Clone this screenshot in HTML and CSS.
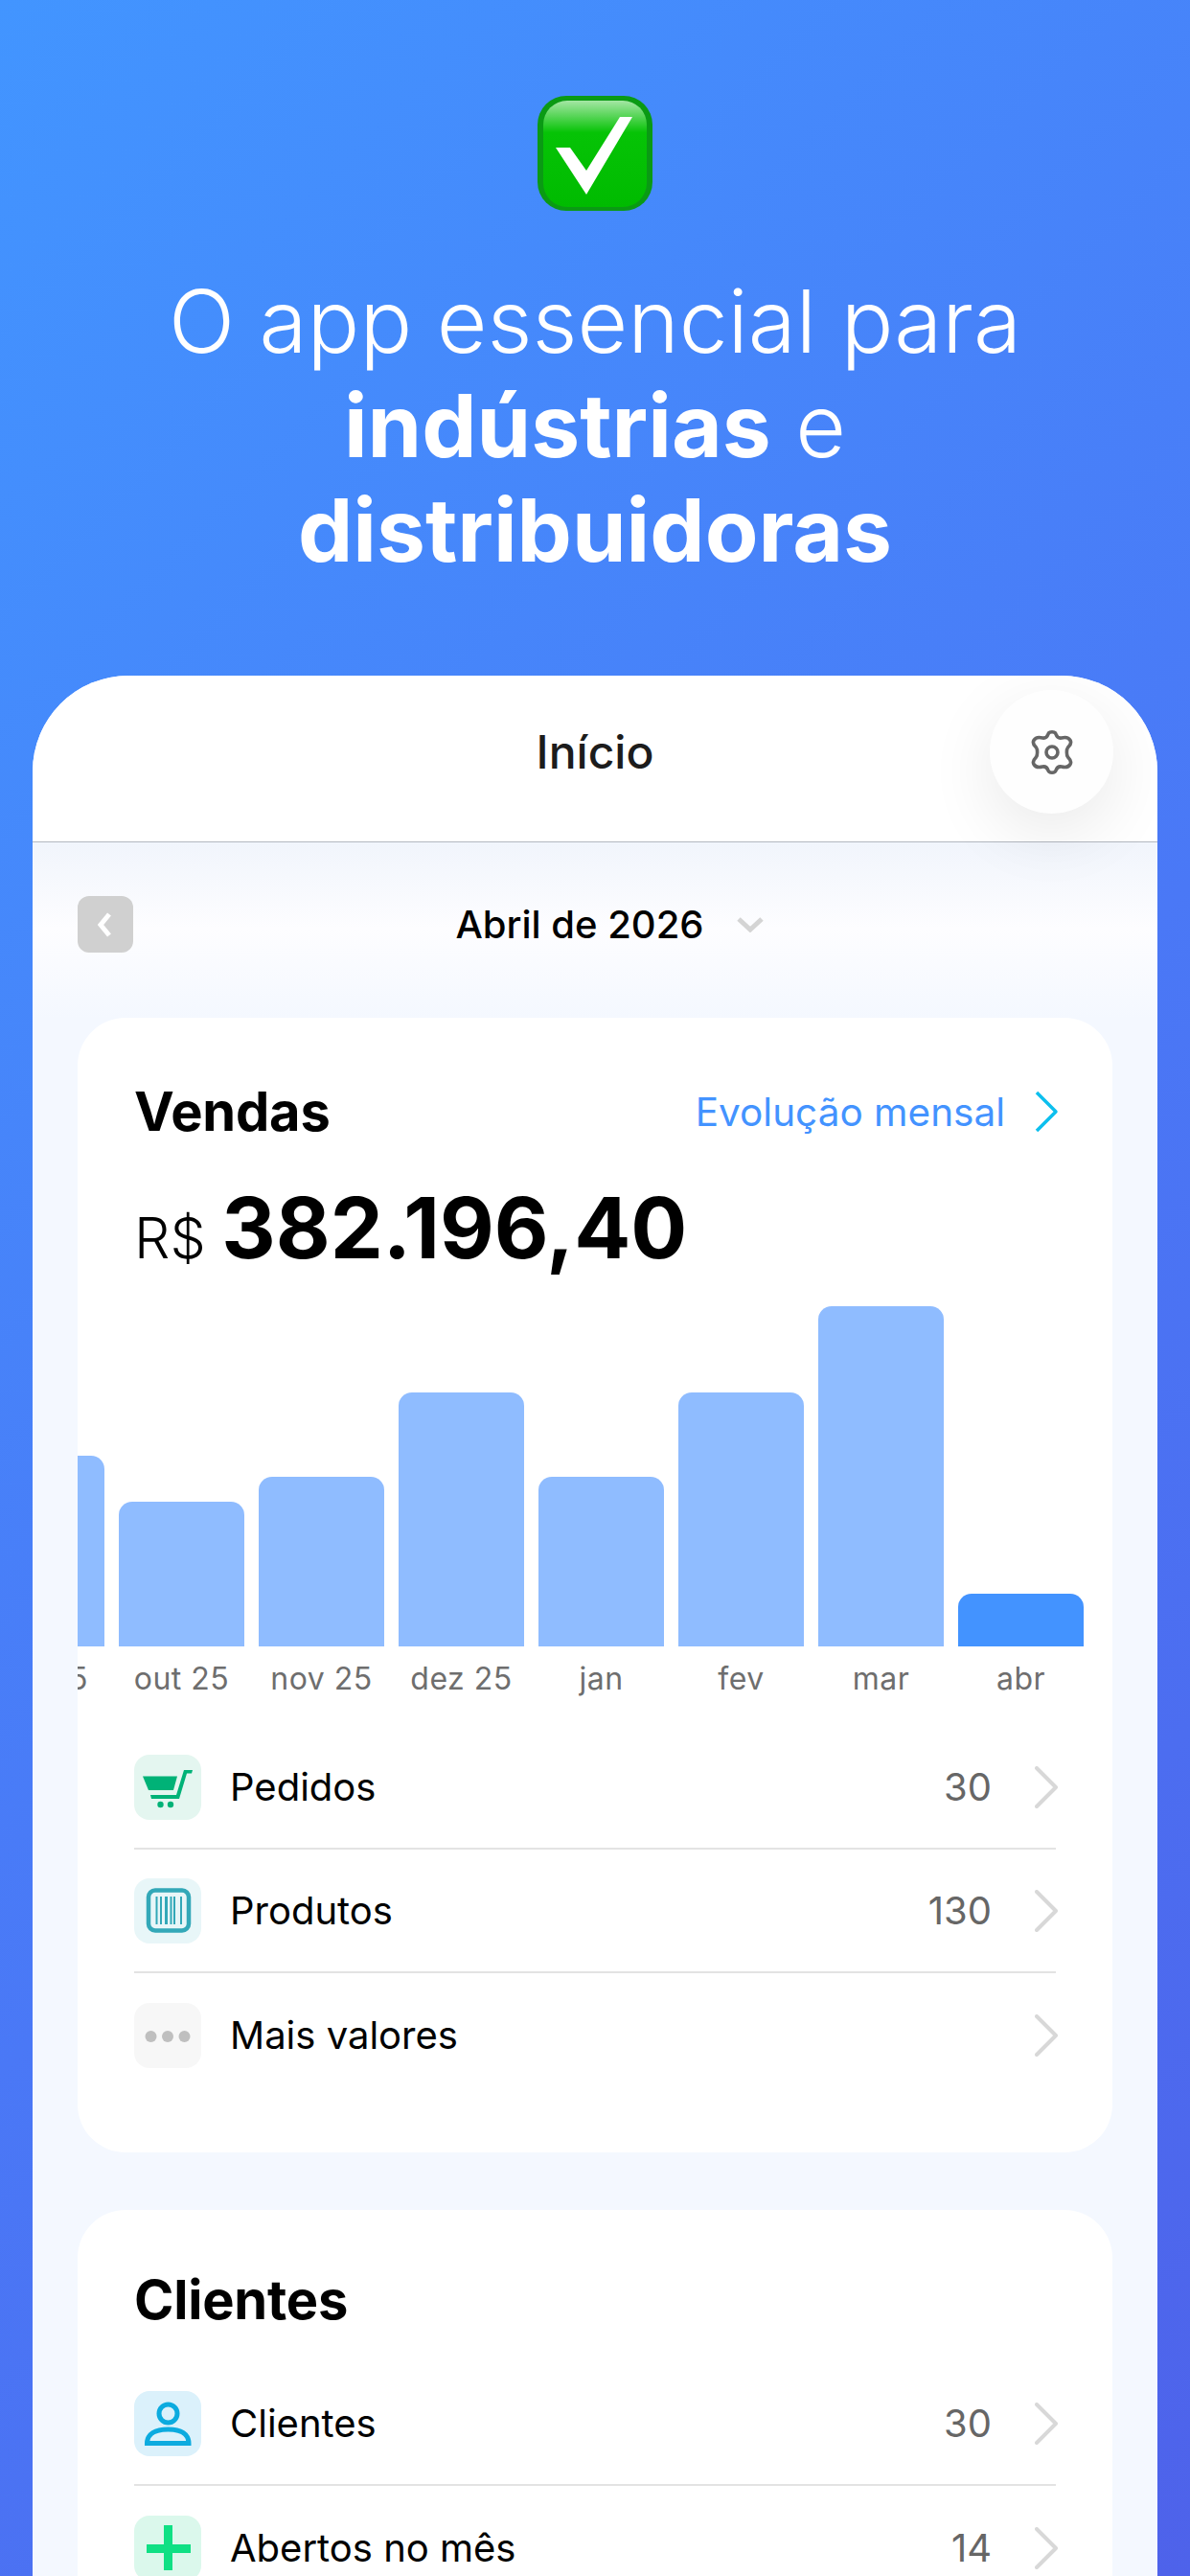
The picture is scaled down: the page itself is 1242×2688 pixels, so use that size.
FILE: index.html
```html
<!DOCTYPE html>
<html lang="pt-br">
<head>
    <meta charset="UTF-8">
    <meta name="viewport" content="width=device-width, initial-scale=1.0">
    <link rel="stylesheet" href="styles.css">
    <title>Início</title>
</head>
<body>
    <header class="hero">
        <svg class="hero-check" viewBox="0 0 120 120">
            <defs>
                <linearGradient id="shine" x1="0" y1="0" x2="0" y2="1">
                    <stop offset="0" stop-color="#a4e6a4"/>
                    <stop offset="0.3" stop-color="#06c306"/>
                    <stop offset="1" stop-color="#00bb00"/>
                </linearGradient>
            </defs>
            <rect x="0" y="0" width="120" height="120" rx="30" fill="#0a9a14"/>
            <rect x="6" y="5" width="108" height="111" rx="25" fill="url(#shine)"/>
            <path d="M19 54H34L51 78L86 22H99L51 103Z" fill="#fff"/>
        </svg>
        <h1 class="hero-title">O app essencial para<br><strong>indústrias</strong> e<br><strong>distribuidoras</strong></h1>
    </header>

    <main class="phone">
        <div class="topbar">
            <span class="topbar-title">Início</span>
            <button class="settings">
                <svg viewBox="0 0 48 48" width="48" height="48" fill="none" stroke="#666" stroke-width="3.600" stroke-linejoin="round">
                    <path d="M14 9C17 9.500 19 8 20 5C21 2 27 2 28 5C29 8 31 9.500 34 9C37 8.200 41 8 43 11.500C45 15 42.500 17 40.500 19C39 21 39 27 40.500 29C42.500 31 45 33 43 36.500C41 40 37 39.800 34 39C31 38.500 29 40 28 43C27 46 21 46 20 43C19 40 17 38.500 14 39C11 39.800 7 40 5 36.500C3 33 5.500 31 7.500 29C9 27 9 21 7.500 19C5.500 17 3 15 5 11.500C7 8 11 8.200 14 9Z"/>
                    <circle cx="24" cy="24" r="6"/>
                </svg>
            </button>
        </div>

        <div class="content">
            <div class="month">
                <span class="month-back">
                    <svg viewBox="0 0 58 59" width="58" height="59" fill="none" stroke="#fff" stroke-width="5"><path d="M33 19L24 30L33 41"/></svg>
                </span>
                <span class="month-name">Abril de 2026</span>
                <svg class="month-arrow" viewBox="0 0 28 16" width="28" height="16" fill="none" stroke="#d4d4d4" stroke-width="5"><path d="M2 2L14 13L26 2"/></svg>
            </div>

            <section class="card sales">
                <div class="card-head">
                    <h2>Vendas</h2>
                    <a class="card-link">Evolução mensal
                        <svg viewBox="0 0 26 44" width="26" height="44" fill="none" stroke="#0cbfee" stroke-width="3.500" stroke-linejoin="round"><path d="M3 2L23 22L3 42"/></svg>
                    </a>
                </div>
                <p class="amount"><span>R$</span> <b>382.196,40</b></p>

                <div class="chart">
                    <div class="col"><div class="bar" style="height:199px"></div><span>set 25</span></div>
                    <div class="col"><div class="bar" style="height:151px"></div><span>out 25</span></div>
                    <div class="col"><div class="bar" style="height:177px"></div><span>nov 25</span></div>
                    <div class="col"><div class="bar" style="height:265px"></div><span>dez 25</span></div>
                    <div class="col"><div class="bar" style="height:177px"></div><span>jan</span></div>
                    <div class="col"><div class="bar" style="height:265px"></div><span>fev</span></div>
                    <div class="col"><div class="bar" style="height:355px"></div><span>mar</span></div>
                    <div class="col"><div class="bar bar-now" style="height:55px"></div><span>abr</span></div>
                </div>

                <ul class="rows">
                    <li class="row">
                        <span class="ico ico-cart">
                            <svg viewBox="0 0 70 68" width="70" height="68" fill="#00b277">
                                <path d="M9 22.500H45L41 37H15Z"/>
                                <path d="M52 16H61L60 19.500H55L47 46H18L17 42H44Z"/>
                                <circle cx="27.500" cy="52" r="3.200"/>
                                <circle cx="38" cy="52" r="3.200"/>
                            </svg>
                        </span>
                        <span class="row-name">Pedidos</span>
                        <span class="row-num">30</span>
                        <svg class="row-arrow" viewBox="0 0 24 44" width="24" height="44" fill="none" stroke="#d8d8d8" stroke-width="4" stroke-linecap="round" stroke-linejoin="round"><path d="M2 2L22 22L2 42"/></svg>
                    </li>
                    <li class="row">
                        <span class="ico ico-code">
                            <svg viewBox="0 0 70 68" width="70" height="68" fill="none" stroke="#33a8b8">
                                <rect x="15" y="12.500" width="42" height="42" rx="7" stroke-width="4.500"/>
                                <path d="M23.500 19V48M28 19V48M38.500 19V48M42 19V48M49 19V48" stroke-width="2"/>
                                <path d="M33.500 19V48" stroke-width="3"/>
                            </svg>
                        </span>
                        <span class="row-name">Produtos</span>
                        <span class="row-num">130</span>
                        <svg class="row-arrow" viewBox="0 0 24 44" width="24" height="44" fill="none" stroke="#d8d8d8" stroke-width="4" stroke-linecap="round" stroke-linejoin="round"><path d="M2 2L22 22L2 42"/></svg>
                    </li>
                    <li class="row">
                        <span class="ico ico-more">
                            <svg viewBox="0 0 70 68" width="70" height="68" fill="#bfbfbf">
                                <circle cx="17.500" cy="35" r="6"/>
                                <circle cx="35" cy="35" r="6"/>
                                <circle cx="52.500" cy="35" r="6"/>
                            </svg>
                        </span>
                        <span class="row-name">Mais valores</span>
                        <span class="row-num"></span>
                        <svg class="row-arrow" viewBox="0 0 24 44" width="24" height="44" fill="none" stroke="#d8d8d8" stroke-width="4" stroke-linecap="round" stroke-linejoin="round"><path d="M2 2L22 22L2 42"/></svg>
                    </li>
                </ul>
            </section>

            <section class="card clients">
                <div class="card-head">
                    <h2>Clientes</h2>
                </div>
                <ul class="rows">
                    <li class="row">
                        <span class="ico ico-user">
                            <svg viewBox="0 0 70 68" width="70" height="68" fill="none" stroke="#0cabdf" stroke-width="5">
                                <circle cx="35.500" cy="23.500" r="9.500"/>
                                <path d="M13.500 54.500C13.500 45 22 40 35.500 40C49 40 57 45 57 54.500Z"/>
                            </svg>
                        </span>
                        <span class="row-name">Clientes</span>
                        <span class="row-num">30</span>
                        <svg class="row-arrow" viewBox="0 0 24 44" width="24" height="44" fill="none" stroke="#d8d8d8" stroke-width="4" stroke-linecap="round" stroke-linejoin="round"><path d="M2 2L22 22L2 42"/></svg>
                    </li>
                    <li class="row">
                        <span class="ico ico-plus">
                            <svg viewBox="0 0 70 68" width="70" height="68" fill="#0fe084">
                                <path d="M31 10H40V30H59V39H40V57H31V39H13V30H31Z"/>
                            </svg>
                        </span>
                        <span class="row-name">Abertos no mês</span>
                        <span class="row-num">14</span>
                        <svg class="row-arrow" viewBox="0 0 24 44" width="24" height="44" fill="none" stroke="#d8d8d8" stroke-width="4" stroke-linecap="round" stroke-linejoin="round"><path d="M2 2L22 22L2 42"/></svg>
                    </li>
                </ul>
            </section>
        </div>
    </main>
</body>
</html>
```

FILE: styles.css
```css
* {
    box-sizing: border-box;
}

html, body {
    margin: 0;
    height: 2688px;
    overflow: hidden;
}

body {
    background-image: linear-gradient(135deg, #4295ff 0%, #4a78f6 55%, #4e62ea 100%);
    font-family: Inter, "Liberation Sans", sans-serif;
    color: #000;
}

.hero {
    height: 705px;
    padding-top: 100px;
    text-align: center;
}

.hero-check {
    display: block;
    width: 120px;
    height: 120px;
    margin: 0 auto;
}

.hero-title {
    margin: 61px 0 0;
    color: #fff;
    font-size: 91px;
    line-height: 109px;
    font-weight: 300;
}

.hero-title strong {
    font-weight: 700;
}

.phone {
    position: relative;
    width: 1174px;
    height: 1983px;
    margin: 0 auto;
    border-radius: 100px 100px 0 0;
    overflow: hidden;
    background-color: #f4f8ff;
}

.topbar {
    height: 174px;
    padding-bottom: 14px;
    display: flex;
    align-items: center;
    justify-content: center;
    background-color: #fff;
    border-bottom: 1px solid #b3b8c0;
}

.topbar-title {
    font-size: 48px;
    font-weight: 500;
    color: #1c1c1c;
}

.settings {
    position: absolute;
    top: 15px;
    left: 999px;
    width: 129px;
    height: 129px;
    padding: 0;
    display: flex;
    align-items: center;
    justify-content: center;
    border: none;
    border-radius: 50%;
    background-color: #fefefe;
    box-shadow: 0 20px 70px rgba(0, 0, 0, 0.09);
}

.content {
    padding: 0 47px;
    background-image: linear-gradient(to bottom, #f1f5fc 0, #fdfdff 90px, #f4f8ff 184px);
    background-repeat: no-repeat;
}

.month {
    position: relative;
    height: 183px;
    padding-bottom: 12px;
    padding-left: 30px;
    display: flex;
    align-items: center;
    justify-content: center;
    gap: 34px;
}

.month-back {
    position: absolute;
    left: 0;
    top: 56px;
    width: 58px;
    height: 59px;
    border-radius: 12px;
    background-color: #d0d0d0;
}

.month-back svg {
    display: block;
}

.month-name {
    font-size: 40px;
    font-weight: 500;
}

.card {
    background-color: #fff;
    border-radius: 50px;
    overflow: hidden;
    padding: 0 59px;
}

.sales {
    height: 1184px;
    padding-top: 62px;
    margin-bottom: 60px;
}

.clients {
    height: 600px;
    padding-top: 58px;
}

.card-head {
    display: flex;
    align-items: center;
    justify-content: space-between;
    height: 72px;
}

.card h2 {
    margin: 0;
    font-size: 56px;
    font-weight: 700;
    letter-spacing: -0.2px;
}

.card-link {
    display: flex;
    align-items: center;
    gap: 30px;
    margin-right: -3px;
    color: #4393ff;
    font-size: 40.500px;
}

.amount {
    margin: 33px 0 0;
    height: 104px;
    line-height: 104px;
    white-space: nowrap;
    font-size: 59px;
    font-weight: 300;
}

.amount b {
    font-size: 87.500px;
    font-weight: 700;
}

.chart {
    display: flex;
    justify-content: flex-end;
    align-items: flex-end;
    gap: 15px;
    height: 436px;
    margin: 15px -29px 0 -59px;
}

.col {
    flex: 0 0 131px;
    text-align: center;
    white-space: nowrap;
}

.col span {
    display: block;
    height: 66px;
    line-height: 68px;
    font-size: 32px;
    letter-spacing: 0.5px;
    color: #6e6e6e;
}

.bar {
    background-color: #8fbcff;
    border-radius: 14px 14px 0 0;
}

.bar-now {
    background-color: #4393ff;
}

.rows {
    list-style: none;
    margin: 17px 0 0;
    padding: 0;
}

.clients .rows {
    margin-top: 29px;
}

.row {
    display: flex;
    align-items: center;
    height: 129px;
    border-bottom: 2px solid #e3e3e3;
}

.row:last-child {
    border-bottom: none;
}

.ico {
    flex: 0 0 70px;
    height: 68px;
    margin-right: 30px;
    border-radius: 16px;
}

.ico svg {
    display: block;
}

.ico-cart { background-color: #e4f6f0; }
.ico-code { background-color: #e8f6f8; }
.ico-more { background-color: #f7f7f7; }
.ico-user { background-color: #dbf1fb; }
.ico-plus { background-color: #dbf8ec; }

.row-name {
    flex: 1;
    font-size: 40px;
}

.row-num {
    font-size: 40px;
    color: #666;
    margin-right: 45px;
}

.row-arrow {
    margin-right: -2px;
}
```
